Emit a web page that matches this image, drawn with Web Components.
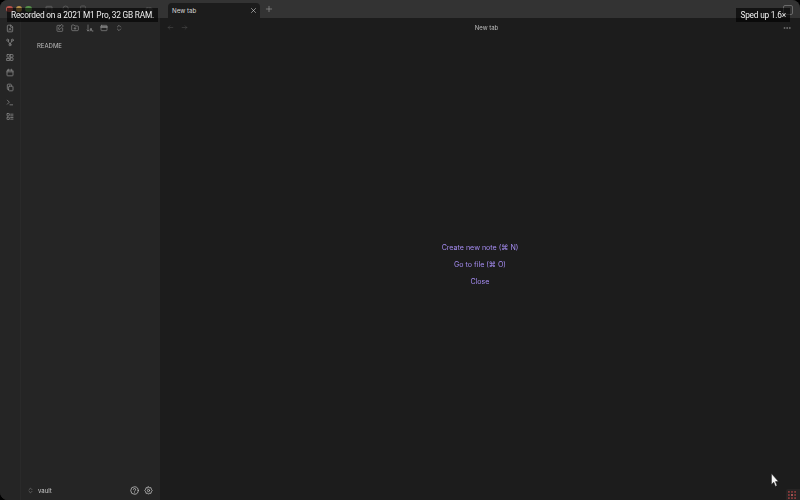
<!DOCTYPE html>
<html>
<head>
<meta charset="utf-8">
<style>
  html, body { margin: 0; height: 100%; background: #000; }
  body { font-family: "Inter", "Liberation Sans", sans-serif; overflow: hidden; }
</style>
</head>
<body>
<app-window>
  <app-ribbon slot="ribbon"></app-ribbon>
  <file-pane slot="side"></file-pane>
  <tab-strip slot="tabs"></tab-strip>
  <view-header slot="header"></view-header>
  <empty-state slot="main"></empty-state>
</app-window>
<caption-chip style="left:7px;top:8px">Recorded on a 2021 M1 Pro, 32 GB RAM.</caption-chip>
<caption-chip style="right:10px;top:8px">Sped up 1.6×</caption-chip>
<screen-cursor></screen-cursor>
<rec-badge></rec-badge>

<script>
const stroke = (body, size = 10, op = 1, w = 2) => `<svg width="${size}" height="${size}" viewBox="0 0 24 24" fill="none" stroke="currentColor" stroke-width="${w}" stroke-linecap="round" stroke-linejoin="round" opacity="${op}">${body}</svg>`;

const icons = {
  file: '<path d="M14 2H6a2 2 0 0 0-2 2v16a2 2 0 0 0 2 2h12a2 2 0 0 0 2-2V8z"/><path d="M14 2v6h6"/><path d="M9 17l3-6 3 6"/>',
  graph: '<circle cx="5" cy="5" r="3"/><circle cx="19" cy="5" r="3"/><circle cx="12" cy="19" r="3"/><path d="M7 8l4 8M17 8l-4 8"/>',
  canvas: '<rect x="3" y="3" width="8" height="8" rx="1"/><rect x="13" y="13" width="8" height="8" rx="1"/><rect x="13" y="3" width="8" height="8" rx="1"/><path d="M3 15h8v6H3z"/>',
  calendar: '<rect x="3" y="5" width="18" height="17" rx="2"/><path d="M16 2v5M8 2v5M3 10h18"/>',
  copy: '<rect x="8" y="8" width="13" height="14" rx="2"/><path d="M16 8V4a2 2 0 0 0-2-2H6a2 2 0 0 0-2 2v12a2 2 0 0 0 2 2h2"/>',
  terminal: '<path d="M4 17l6-6-6-6"/><path d="M12 19h8"/>',
  blocks: '<rect x="3" y="3" width="7" height="7" rx="1"/><rect x="3" y="14" width="7" height="7" rx="1"/><path d="M14 5h7M14 10h7M14 15h7M14 20h7"/>',
  edit: '<path d="M20 13v7a2 2 0 0 1-2 2H5a2 2 0 0 1-2-2V6a2 2 0 0 1 2-2h7"/><path d="M18 2l4 4-10 10H8v-4z"/>',
  folder: '<path d="M20 20a2 2 0 0 0 2-2V8a2 2 0 0 0-2-2h-8l-3-3H4a2 2 0 0 0-2 2v13a2 2 0 0 0 2 2z"/><path d="M12 10v6M9 13h6"/>',
  sort: '<path d="M6 3v18M3 18l3 3 3-3"/><path d="M12 21l3-9 3 9M13 18h4M21 21h-2"/>',
  box: '<rect x="3" y="4" width="18" height="16" rx="2"/><path d="M3 9h18" stroke-width="4"/>',
  updown: '<path d="M7 9l5-5 5 5M7 15l5 5 5-5"/>',
  help: '<circle cx="12" cy="12" r="10"/><path d="M9 9a3 3 0 0 1 6 1c0 2-3 2-3 4"/><path d="M12 18h.01"/>',
  gear: '<circle cx="12" cy="12" r="3"/><path d="M12 2l2.5 3 4-.6.9 3.9L22 12l-2.6 3.7-.9 3.9-4-.6L12 22l-2.5-3-4 .6-.9-3.9L2 12l2.6-3.7.9-3.9 4 .6z"/>',
  back: '<path d="M20 12H4M10 6l-6 6 6 6"/>',
  fwd: '<path d="M4 12h16M14 6l6 6-6 6"/>',
  close: '<path d="M5 5l14 14M19 5L5 19"/>',
  plus: '<path d="M12 4v16M4 12h16"/>',
  more: '<circle cx="4" cy="12" r="1.5"/><circle cx="12" cy="12" r="1.5"/><circle cx="20" cy="12" r="1.5"/>',
  tabs: '<path d="M3 20V6a2 2 0 0 1 2-2h14a2 2 0 0 1 2 2v14z"/><path d="M3 9h18"/>',
  search: '<circle cx="11" cy="11" r="8"/><path d="M21 21l-4-4"/>',
  bookmark: '<path d="M19 21l-7-4-7 4V5a2 2 0 0 1 2-2h10a2 2 0 0 1 2 2z"/>',
  panel: '<rect x="3" y="3" width="18" height="18" rx="3"/><path d="M15 3v18"/>'
};

class AppWindow extends HTMLElement {
  constructor() {
    super();
    this.attachShadow({mode: "open"});
    this.shadowRoot.innerHTML = `
    <style>
      :host { display: flex; width: 800px; height: 500px; background: #1c1c1c; border-radius: 8px; overflow: hidden; filter: blur(.3px); }
      .left { width: 160px; flex-shrink: 0; display: flex; flex-direction: column; background: #252525; }
      .traffic { height: 18px; background: #333; display: flex; align-items: center; padding-left: 6px; flex-shrink: 0; color: #6a6a6a; }
      .traffic i { width: 6.5px; height: 6.5px; border-radius: 50%; margin-right: 3px; }
      .traffic .nav { display: flex; align-items: center; gap: 9px; margin-left: 7px; padding: 2px 3px; border-radius: 2px; }
      .traffic .nav svg { display: block; }
      .traffic .panel { margin-left: auto; margin-right: 7px; display: block; }
      .cols { flex: 1; display: flex; min-height: 0; }
      .right { flex: 1; display: flex; flex-direction: column; min-width: 0; }
      .main { flex: 1; display: flex; min-height: 0; }
      .corner { position: absolute; top: 5px; right: 7px; width: 8px; height: 8px; border: 1px solid #6a6a6a; border-radius: 2px; }
    </style>
    <div class="left">
      <div class="traffic">
        <i style="background:#b9524b"></i><i style="background:#b8924a"></i><i style="background:#55904a"></i>
        <div class="nav">${stroke(icons.tabs, 8)}${stroke(icons.search, 8)}${stroke(icons.bookmark, 8)}</div>
        <span class="panel">${stroke(icons.panel, 8)}</span>
      </div>
      <div class="cols"><slot name="ribbon"></slot><slot name="side"></slot></div>
    </div>
    <div class="right">
      <slot name="tabs"></slot>
      <slot name="header"></slot>
      <div class="main"><slot name="main"></slot></div>
    </div>
    <div class="corner"></div>`;
  }
}
customElements.define("app-window", AppWindow);

class AppRibbon extends HTMLElement {
  constructor() {
    super();
    this.attachShadow({mode: "open"});
    const names = ["file", "graph", "canvas", "calendar", "copy", "terminal", "blocks"];
    this.shadowRoot.innerHTML = `
    <style>
      :host { display: flex; flex-direction: column; align-items: center; gap: 6.83px; width: 20px; padding-top: 6px; color: #858585; background: #252525; border-right: 1px solid #2a2a2a; flex-shrink: 0; }
      svg { display: block; }
      div { height: 8px; width: 8px; display: flex; align-items: center; justify-content: center; }
    </style>
    ${names.map(n => `<div>${stroke(icons[n], 9, 1, 2.4)}</div>`).join("")}`;
  }
}
customElements.define("app-ribbon", AppRibbon);

class FilePane extends HTMLElement {
  constructor() {
    super();
    this.attachShadow({mode: "open"});
    const top = ["edit", "folder", "sort", "box", "updown"];
    this.shadowRoot.innerHTML = `
    <style>
      :host { flex: 1; display: flex; flex-direction: column; min-width: 0; color: #8c8c8c; }
      .bar { display: flex; gap: 6.8px; height: 20px; align-items: center; padding-left: 35px; }
      .tree { flex: 1; padding: 1.5px 0 0 16px; font-size: 6px; line-height: 12px; color: #bcbcbc; }
      .foot { height: 20px; display: flex; align-items: center; padding: 0 7px 0 6px; gap: 5px; font-size: 6px; color: #c8c8c8; }
      .foot b { font-weight: 400; flex: 1; margin-left: -1px; }
      svg { display: block; }
    </style>
    <div class="bar">${top.map(n => stroke(icons[n], 8)).join("")}</div>
    <div class="tree">README</div>
    <div class="foot">${stroke(icons.updown, 7, .6)}<b>vault</b>${stroke(icons.help, 9)}${stroke(icons.gear, 9)}</div>`;
  }
}
customElements.define("file-pane", FilePane);

class TabStrip extends HTMLElement {
  constructor() {
    super();
    this.attachShadow({mode: "open"});
    this.shadowRoot.innerHTML = `
    <style>
      :host { display: flex; align-items: flex-end; height: 18px; background: #333; padding-left: 8px; flex-shrink: 0; }
      .tab { width: 92px; height: 15px; box-sizing: border-box; background: #1c1c1c; border-radius: 4px 4px 0 0; display: flex; align-items: center; justify-content: space-between; padding: 0 3px 0 4px; font-size: 6.2px; color: #d8d8d8; }
      .plus { margin: 0 0 5px 5px; color: #999; }
      svg { display: block; }
    </style>
    <div class="tab"><span>New tab</span>${stroke(icons.close, 7)}</div>
    <div class="plus">${stroke(icons.plus, 8)}</div>`;
  }
}
customElements.define("tab-strip", TabStrip);

class ViewHeader extends HTMLElement {
  constructor() {
    super();
    this.attachShadow({mode: "open"});
    this.shadowRoot.innerHTML = `
    <style>
      :host { display: flex; align-items: center; height: 19px; padding: 0 9px 0 7px; color: #4a4a4a; flex-shrink: 0; gap: 7px; }
      .title { flex: 1; text-align: center; font-size: 6px; color: #bdbdbd; padding-left: 2px; }
      svg { display: block; }
      .more { color: #888; }
    </style>
    ${stroke(icons.back, 7)}${stroke(icons.fwd, 7)}
    <div class="title">New tab</div>
    <div class="more">${stroke(icons.more, 8)}</div>`;
  }
}
customElements.define("view-header", ViewHeader);

class EmptyState extends HTMLElement {
  constructor() {
    super();
    this.attachShadow({mode: "open"});
    this.shadowRoot.innerHTML = `
    <style>
      :host { flex: 1; display: flex; flex-direction: column; align-items: center; justify-content: center; gap: 6.2px; padding-bottom: 6px; font-size: 7.1px; line-height: 10.6px; color: #a48bf0; }
    </style>
    <div>Create new note (⌘ N)</div>
    <div>Go to file (⌘ O)</div>
    <div>Close</div>`;
  }
}
customElements.define("empty-state", EmptyState);

class CaptionChip extends HTMLElement {
  constructor() {
    super();
    this.attachShadow({mode: "open"});
    this.shadowRoot.innerHTML = `
    <style>
      :host { position: absolute; background: rgba(0,0,0,.62); color: #f0f0f0; font-family: Roboto, "Liberation Sans", sans-serif; font-size: 8.3px; letter-spacing: -.2px; line-height: 14px; padding: 0 4px; white-space: nowrap; }
    </style>
    <slot></slot>`;
  }
}
customElements.define("caption-chip", CaptionChip);

class ScreenCursor extends HTMLElement {
  constructor() {
    super();
    this.attachShadow({mode: "open"});
    this.shadowRoot.innerHTML = `
    <style>:host { position: absolute; left: 771px; top: 471px; width: 9px; height: 14px; }</style>
    <svg width="9" height="14" viewBox="0 0 10 14" preserveAspectRatio="none"><path d="M.5 .5v11l2.6-2.3 1.8 4.2 1.8-.8-1.8-4h3.4z" fill="#f4f4f4" stroke="#111" stroke-width=".5"/></svg>`;
  }
}
customElements.define("screen-cursor", ScreenCursor);

class RecBadge extends HTMLElement {
  constructor() {
    super();
    this.attachShadow({mode: "open"});
    this.shadowRoot.innerHTML = `
    <style>:host { position: absolute; right: 0; bottom: 0; width: 14px; height: 11px; background: #262424; display: flex; align-items: center; border-radius: 2px 0 0 0; }
    svg { margin-left: 1.5px; }</style>
    <svg width="8" height="8" viewBox="0 0 9 9" fill="#8a3a3a"><rect width="2" height="2"/><rect x="3.5" width="2" height="2"/><rect x="7" width="2" height="2"/><rect y="3.5" width="2" height="2"/><rect x="3.5" y="3.5" width="2" height="2" fill="#c06060"/><rect x="7" y="3.5" width="2" height="2"/><rect y="7" width="2" height="2"/><rect x="3.5" y="7" width="2" height="2"/><rect x="7" y="7" width="2" height="2"/></svg>`;
  }
}
customElements.define("rec-badge", RecBadge);
</script>
</body>
</html>
